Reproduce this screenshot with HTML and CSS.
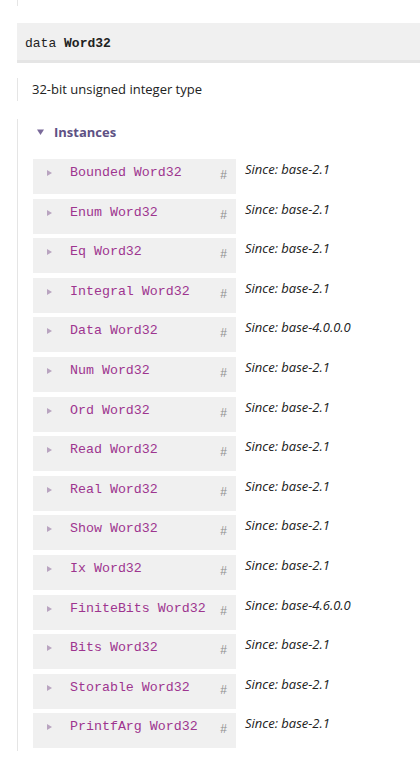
FILE: index.html
```html
<!DOCTYPE html>
<html>
<head>
<meta charset="utf-8">
<link rel="stylesheet" href="styles.css">
</head>
<body>
<div class="prev-line"></div>
<p class="decl"><span class="kw">data</span> <b class="tname">Word32</b></p>
<div class="doc"><p>32-bit unsigned integer type</p></div>
<div class="subs">
  <p class="caption"><svg class="caret" width="7" height="6" viewBox="0 0 7 6"><path d="M0 0.5H7L3.5 6Z"/></svg><span>Instances</span></p>
  <div class="rows">
    <div class="row"><div class="src"><svg class="tri" width="5" height="6" viewBox="0 0 5 6"><path d="M0 0L5 3L0 6Z"/></svg><span class="inst">Bounded Word32</span><span class="link">#</span></div><div class="since">Since: base-2.1</div></div>
    <div class="row"><div class="src"><svg class="tri" width="5" height="6" viewBox="0 0 5 6"><path d="M0 0L5 3L0 6Z"/></svg><span class="inst">Enum Word32</span><span class="link">#</span></div><div class="since">Since: base-2.1</div></div>
    <div class="row"><div class="src"><svg class="tri" width="5" height="6" viewBox="0 0 5 6"><path d="M0 0L5 3L0 6Z"/></svg><span class="inst">Eq Word32</span><span class="link">#</span></div><div class="since">Since: base-2.1</div></div>
    <div class="row"><div class="src"><svg class="tri" width="5" height="6" viewBox="0 0 5 6"><path d="M0 0L5 3L0 6Z"/></svg><span class="inst">Integral Word32</span><span class="link">#</span></div><div class="since">Since: base-2.1</div></div>
    <div class="row"><div class="src"><svg class="tri" width="5" height="6" viewBox="0 0 5 6"><path d="M0 0L5 3L0 6Z"/></svg><span class="inst">Data Word32</span><span class="link">#</span></div><div class="since">Since: base-4.0.0.0</div></div>
    <div class="row"><div class="src"><svg class="tri" width="5" height="6" viewBox="0 0 5 6"><path d="M0 0L5 3L0 6Z"/></svg><span class="inst">Num Word32</span><span class="link">#</span></div><div class="since">Since: base-2.1</div></div>
    <div class="row"><div class="src"><svg class="tri" width="5" height="6" viewBox="0 0 5 6"><path d="M0 0L5 3L0 6Z"/></svg><span class="inst">Ord Word32</span><span class="link">#</span></div><div class="since">Since: base-2.1</div></div>
    <div class="row"><div class="src"><svg class="tri" width="5" height="6" viewBox="0 0 5 6"><path d="M0 0L5 3L0 6Z"/></svg><span class="inst">Read Word32</span><span class="link">#</span></div><div class="since">Since: base-2.1</div></div>
    <div class="row"><div class="src"><svg class="tri" width="5" height="6" viewBox="0 0 5 6"><path d="M0 0L5 3L0 6Z"/></svg><span class="inst">Real Word32</span><span class="link">#</span></div><div class="since">Since: base-2.1</div></div>
    <div class="row"><div class="src"><svg class="tri" width="5" height="6" viewBox="0 0 5 6"><path d="M0 0L5 3L0 6Z"/></svg><span class="inst">Show Word32</span><span class="link">#</span></div><div class="since">Since: base-2.1</div></div>
    <div class="row"><div class="src"><svg class="tri" width="5" height="6" viewBox="0 0 5 6"><path d="M0 0L5 3L0 6Z"/></svg><span class="inst">Ix Word32</span><span class="link">#</span></div><div class="since">Since: base-2.1</div></div>
    <div class="row"><div class="src"><svg class="tri" width="5" height="6" viewBox="0 0 5 6"><path d="M0 0L5 3L0 6Z"/></svg><span class="inst">FiniteBits Word32</span><span class="link">#</span></div><div class="since">Since: base-4.6.0.0</div></div>
    <div class="row"><div class="src"><svg class="tri" width="5" height="6" viewBox="0 0 5 6"><path d="M0 0L5 3L0 6Z"/></svg><span class="inst">Bits Word32</span><span class="link">#</span></div><div class="since">Since: base-2.1</div></div>
    <div class="row"><div class="src"><svg class="tri" width="5" height="6" viewBox="0 0 5 6"><path d="M0 0L5 3L0 6Z"/></svg><span class="inst">Storable Word32</span><span class="link">#</span></div><div class="since">Since: base-2.1</div></div>
    <div class="row"><div class="src"><svg class="tri" width="5" height="6" viewBox="0 0 5 6"><path d="M0 0L5 3L0 6Z"/></svg><span class="inst">PrintfArg Word32</span><span class="link">#</span></div><div class="since">Since: base-2.1</div></div>
  </div>
</div>
</body>
</html>
```
FILE: styles.css
```css
* { box-sizing: border-box; }
html, body { margin: 0; padding: 0; background: #fff; }
body {
  font-family: "Open Sans", "Liberation Sans", sans-serif;
  font-size: 13px;
  color: #222;
}
p { margin: 0; }

.prev-line {
  margin-left: 17px;
  height: 6px;
  border-left: 1px solid #e5e5e5;
}

.decl {
  margin: 17px 0 0 17px;
  height: 40px;
  background: #f0f0f0;
  border-bottom: 3px solid #e5e5e5;
  padding-left: 8px;
  font-family: "Liberation Mono", monospace;
  font-size: 13px;
  line-height: 41px;
  color: #222;
}
.decl .tname { font-weight: bold; }

.doc {
  margin: 15px 0 0 17px;
  height: 23px;
  border-left: 1px solid #e5e5e5;
  padding-left: 14px;
  line-height: 23px;
}

.subs {
  margin: 18px 0 0 17px;
  border-left: 1px solid #e5e5e5;
  padding: 0 0 3px 15px;
}

.caption {
  height: 26px;
  display: flex;
  align-items: center;
  color: #5e5184;
  font-weight: bold;
  font-size: 13px;
}
.caret { fill: #7a6a9a; margin: 0 10px 0 4px; }

.rows {
  margin-top: 14px;
  display: flex;
  flex-direction: column;
  gap: 4.5px;
}
.row { display: flex; align-items: flex-start; }
.src {
  width: 203px;
  height: 35.1px;
  background: #f0f0f0;
  display: flex;
  align-items: flex-start;
  padding: 0 0 0 14px;
  flex: none;
}
.tri { fill: #b9a4c0; margin-top: 11px; flex: none; }
.inst {
  margin-left: 18px;
  font-family: "Liberation Mono", monospace;
  font-size: 13.3px;
  line-height: 28px;
  color: #9e358f;
  white-space: nowrap;
}
.link {
  margin-left: auto;
  width: 16px;
  font-family: "Liberation Mono", monospace;
  font-size: 12px;
  line-height: 34px;
  color: #8f8f8f;
}
.since {
  margin-left: 9px;
  font-style: italic;
  line-height: 20px;
  color: #222;
}
```
